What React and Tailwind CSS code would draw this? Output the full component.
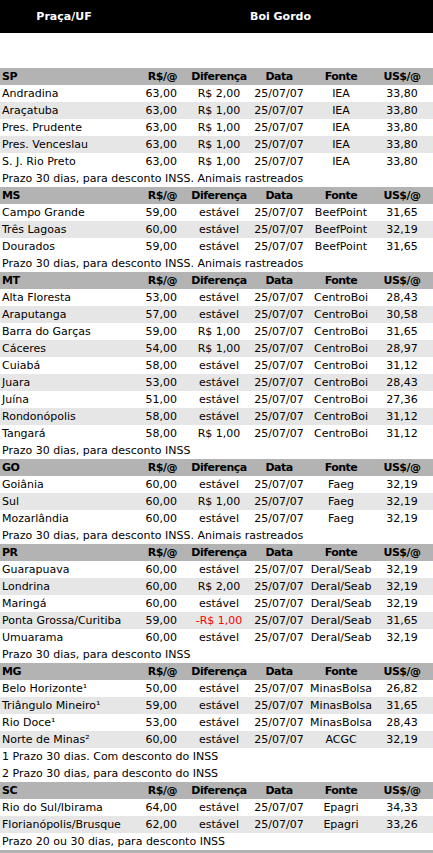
const sections = [
  {
    uf: 'SP',
    rows: [
      ['Andradina', '63,00', 'R$ 2,00', '25/07/07', 'IEA', '33,80'],
      ['Araçatuba', '63,00', 'R$ 1,00', '25/07/07', 'IEA', '33,80'],
      ['Pres. Prudente', '63,00', 'R$ 1,00', '25/07/07', 'IEA', '33,80'],
      ['Pres. Venceslau', '63,00', 'R$ 1,00', '25/07/07', 'IEA', '33,80'],
      ['S. J. Rio Preto', '63,00', 'R$ 1,00', '25/07/07', 'IEA', '33,80'],
    ],
    notes: ['Prazo 30 dias, para desconto INSS. Animais rastreados'],
  },
  {
    uf: 'MS',
    rows: [
      ['Campo Grande', '59,00', 'estável', '25/07/07', 'BeefPoint', '31,65'],
      ['Três Lagoas', '60,00', 'estável', '25/07/07', 'BeefPoint', '32,19'],
      ['Dourados', '59,00', 'estável', '25/07/07', 'BeefPoint', '31,65'],
    ],
    notes: ['Prazo 30 dias, para desconto INSS. Animais rastreados'],
  },
  {
    uf: 'MT',
    rows: [
      ['Alta Floresta', '53,00', 'estável', '25/07/07', 'CentroBoi', '28,43'],
      ['Araputanga', '57,00', 'estável', '25/07/07', 'CentroBoi', '30,58'],
      ['Barra do Garças', '59,00', 'R$ 1,00', '25/07/07', 'CentroBoi', '31,65'],
      ['Cáceres', '54,00', 'R$ 1,00', '25/07/07', 'CentroBoi', '28,97'],
      ['Cuiabá', '58,00', 'estável', '25/07/07', 'CentroBoi', '31,12'],
      ['Juara', '53,00', 'estável', '25/07/07', 'CentroBoi', '28,43'],
      ['Juína', '51,00', 'estável', '25/07/07', 'CentroBoi', '27,36'],
      ['Rondonópolis', '58,00', 'estável', '25/07/07', 'CentroBoi', '31,12'],
      ['Tangará', '58,00', 'R$ 1,00', '25/07/07', 'CentroBoi', '31,12'],
    ],
    notes: ['Prazo 30 dias, para desconto INSS'],
  },
  {
    uf: 'GO',
    rows: [
      ['Goiânia', '60,00', 'estável', '25/07/07', 'Faeg', '32,19'],
      ['Sul', '60,00', 'R$ 1,00', '25/07/07', 'Faeg', '32,19'],
      ['Mozarlândia', '60,00', 'estável', '25/07/07', 'Faeg', '32,19'],
    ],
    notes: ['Prazo 30 dias, para desconto INSS. Animais rastreados'],
  },
  {
    uf: 'PR',
    rows: [
      ['Guarapuava', '60,00', 'estável', '25/07/07', 'Deral/Seab', '32,19'],
      ['Londrina', '60,00', 'R$ 2,00', '25/07/07', 'Deral/Seab', '32,19'],
      ['Maringá', '60,00', 'estável', '25/07/07', 'Deral/Seab', '32,19'],
      ['Ponta Grossa/Curitiba', '59,00', '-R$ 1,00', '25/07/07', 'Deral/Seab', '31,65'],
      ['Umuarama', '60,00', 'estável', '25/07/07', 'Deral/Seab', '32,19'],
    ],
    notes: ['Prazo 30 dias, para desconto INSS'],
  },
  {
    uf: 'MG',
    rows: [
      ['Belo Horizonte¹', '50,00', 'estável', '25/07/07', 'MinasBolsa', '26,82'],
      ['Triângulo Mineiro¹', '59,00', 'estável', '25/07/07', 'MinasBolsa', '31,65'],
      ['Rio Doce¹', '53,00', 'estável', '25/07/07', 'MinasBolsa', '28,43'],
      ['Norte de Minas²', '60,00', 'estável', '25/07/07', 'ACGC', '32,19'],
    ],
    notes: ['1 Prazo 30 dias. Com desconto do INSS', '2 Prazo 30 dias, para desconto do INSS'],
  },
  {
    uf: 'SC',
    rows: [
      ['Rio do Sul/Ibirama', '64,00', 'estável', '25/07/07', 'Epagri', '34,33'],
      ['Florianópolis/Brusque', '62,00', 'estável', '25/07/07', 'Epagri', '33,26'],
    ],
    notes: ['Prazo 20 ou 30 dias, para desconto INSS'],
  },
];

const grid = 'grid grid-cols-[142px_35px_84px_36px_88px_34px] h-[17px] items-center whitespace-nowrap';

function Row({ cells, shaded, bold }) {
  const [place, price, diff, date, source, usd] = cells;
  return (
    <div className={`${grid} ${shaded} ${bold ? 'font-bold tracking-[-0.5px]' : ''}`}>
      <div className="pl-[2px]">{place}</div>
      <div className="text-right">{price}</div>
      <div className={`flex justify-center ${diff.startsWith('-') ? 'text-[#ff0000]' : ''}`}>{diff}</div>
      <div className="flex justify-center">{date}</div>
      <div className="flex justify-center">{source}</div>
      <div className="flex justify-center">{usd}</div>
    </div>
  );
}

export default function App() {
  return (
    <div className="w-[433px] bg-white text-black text-[11px] leading-[17px] font-['DejaVu_Sans',Verdana,sans-serif]">
      <div className="flex h-[33px] items-center bg-black text-white font-bold">
        <div className="w-[128px] text-center">Praça/UF</div>
        <div className="flex-1 text-center">Boi Gordo</div>
      </div>
      <div className="h-[35px]" />
      {sections.map((s) => (
        <div key={s.uf}>
          <Row
            cells={[s.uf, 'R$/@', 'Diferença', 'Data', 'Fonte', 'US$/@']}
            shaded="bg-[#b3b3b3]"
            bold
          />
          {s.rows.map((r, i) => (
            <Row key={r[0]} cells={r} shaded={i % 2 ? 'bg-[#e6e6e6]' : 'bg-white'} />
          ))}
          {s.notes.map((n) => (
            <div key={n} className="h-[17px] pl-[2px] whitespace-nowrap">{n}</div>
          ))}
        </div>
      ))}
      <div className="h-[17px] bg-[#b3b3b3]" />
    </div>
  );
}
